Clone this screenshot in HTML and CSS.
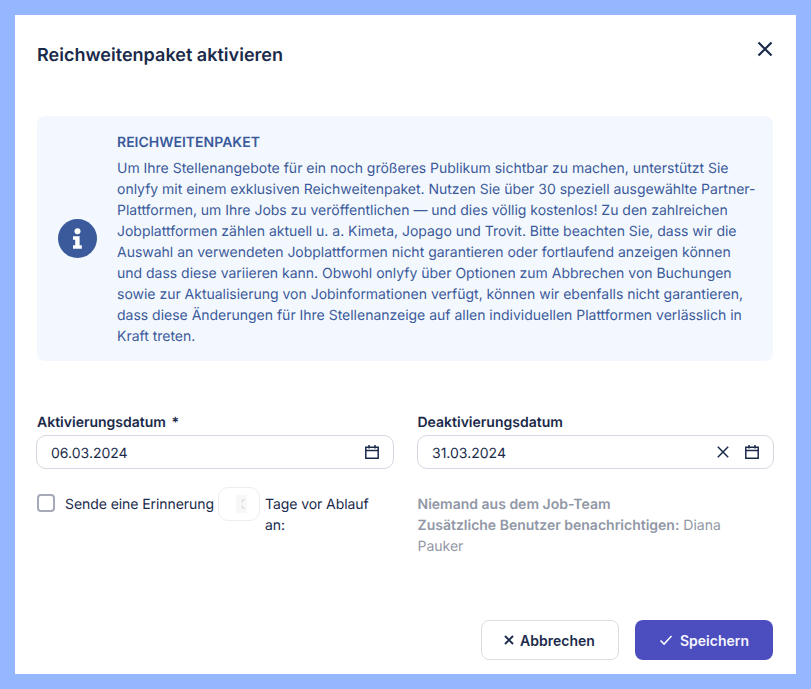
FILE: index.html
```html
<!DOCTYPE html>
<html lang="de">
<head>
<meta charset="utf-8">
<title>Reichweitenpaket aktivieren</title>
<link rel="stylesheet" href="styles.css">
</head>
<body>
<main class="modal">
  <header class="modal-head">
    <h1 class="modal-title">Reichweitenpaket aktivieren</h1>
    <button class="close" aria-label="Schließen">
      <svg viewBox="0 0 24 24" width="24" height="24"><path d="M5.5 5.5l13 13M18.5 5.5l-13 13" class="stroke-2"/></svg>
    </button>
  </header>

  <section class="info">
    <div class="info-icon">
      <svg viewBox="0 0 39 39" width="39" height="39">
        <circle cx="19.5" cy="19.5" r="19.5" fill="#3b5a9b"/>
        <circle cx="19.5" cy="12.2" r="3" fill="#fff"/>
        <path d="M15 17.2h6.6v9h2.2v3.6H15v-3.6h2.2v-5.4H15z" fill="#fff"/>
      </svg>
    </div>
    <div class="info-body">
      <h2 class="info-title">REICHWEITENPAKET</h2>
      <p class="info-text">Um Ihre Stellenangebote für ein noch größeres Publikum sichtbar zu machen, unterstützt Sie onlyfy mit einem exklusiven Reichweitenpaket. Nutzen Sie über 30 speziell ausgewählte Partner-Plattformen, um Ihre Jobs zu veröffentlichen — und dies völlig kostenlos! Zu den zahlreichen Jobplattformen zählen aktuell u. a. Kimeta, Jopago und Trovit. Bitte beachten Sie, dass wir die Auswahl an verwendeten Jobplattformen nicht garantieren oder fortlaufend anzeigen können und dass diese variieren kann. Obwohl onlyfy über Optionen zum Abbrechen von Buchungen sowie zur Aktualisierung von Jobinformationen verfügt, können wir ebenfalls nicht garantieren, dass diese Änderungen für Ihre Stellenanzeige auf allen individuellen Plattformen verlässlich in Kraft treten.</p>
    </div>
  </section>

  <section class="form">
    <div class="col col-left">
      <label class="label">Aktivierungsdatum <span class="req">*</span></label>
      <div class="input">
        <span class="value">06.03.2024</span>
        <svg class="ico" viewBox="0 0 16 16" width="16" height="16"><path d="M1.8 3.2h12.4v11H1.8zM1.8 6.6h12.4M5 1v3.4M11 1v3.4" class="stroke-15"/></svg>
      </div>
      <div class="reminder">
        <span class="check"></span>
        <span class="rem-text">Sende eine Erinnerung</span>
        <span class="number"><span class="spin"><svg viewBox="0 0 11 18" width="11" height="18"><path d="M8 4L5.5 7M5.5 11L8 14" fill="none" stroke="#dcdde4" stroke-width="1.5"/></svg></span></span>
        <span class="rem-text rem-after">Tage vor Ablauf an:</span>
      </div>
    </div>
    <div class="col col-right">
      <label class="label">Deaktivierungsdatum</label>
      <div class="input">
        <span class="value">31.03.2024</span>
        <svg class="ico" viewBox="0 0 16 16" width="16" height="16"><path d="M2.8 2.8l10.4 10.4M13.2 2.8L2.8 13.2" class="stroke-15"/></svg>
        <svg class="ico" viewBox="0 0 16 16" width="16" height="16"><path d="M1.8 3.2h12.4v11H1.8zM1.8 6.6h12.4M5 1v3.4M11 1v3.4" class="stroke-15"/></svg>
      </div>
      <div class="notify">
        <div><strong>Niemand aus dem Job-Team</strong></div>
        <div><strong>Zusätzliche Benutzer benachrichtigen:</strong> Diana<br>Pauker</div>
      </div>
    </div>
  </section>

  <footer class="actions">
    <button class="btn btn-ghost">
      <svg viewBox="0 0 12 12" width="12" height="12"><path d="M2 2l8 8M10 2l-8 8" class="stroke-18"/></svg>
      <span class="btn-label">Abbrechen</span>
    </button>
    <button class="btn btn-primary">
      <svg viewBox="0 0 14 14" width="14" height="14"><path d="M1.5 7.5l3.6 3.6 7.4-8.2" fill="none" stroke="#fff" stroke-width="1.5"/></svg>
      <span class="btn-label">Speichern</span>
    </button>
  </footer>
</main>
</body>
</html>
```

FILE: styles.css
```css
* { box-sizing: border-box; }
html, body { margin: 0; height: 100%; }
body {
  background: #94b7ff;
  padding: 15px;
  font-family: Inter, "Liberation Sans", sans-serif;
  font-size: 14px;
  color: #1a2a4a;
  overflow: hidden;
  text-rendering: geometricPrecision;
}
.modal {
  background: #fff;
  width: 781px;
  height: 659px;
  padding: 0 23px 14px 22px;
  display: flex;
  flex-direction: column;
}
.modal-head {
  height: 101px;
  display: flex;
  justify-content: space-between;
  align-items: flex-start;
  padding-top: 29px;
}
.modal-title { margin: 0; font-size: 18px; line-height: 24px; font-weight: 600; letter-spacing: 0.02px; }
.close {
  border: 0; background: none; padding: 0; margin: -7px -4px 0 0;
  width: 24px; height: 24px; cursor: pointer; display: block;
}
.stroke-2, .stroke-15, .stroke-18 { fill: none; stroke: #1a2a4a; }
.stroke-2 { stroke-width: 2.2; }
.stroke-15 { stroke-width: 1.5; }
.stroke-18 { stroke-width: 1.9; }

.info {
  height: 245px;
  background: #f3f8fe;
  border-radius: 8px;
  display: flex;
  align-items: center;
  padding: 0 16px 0 21px;
  color: #3b5a9b;
}
.info-icon { width: 59px; flex: none; height: 39px; }
.info-body { flex: 1; padding-top: 1px; }
.info-title { margin: 0 0 5px; font-size: 14px; line-height: 21px; font-weight: 600; }
.info-text { margin: 0; line-height: 21px; letter-spacing: -0.012px; }

.form {
  margin-top: 50px;
  display: grid;
  grid-template-columns: 356.5px 356px;
  column-gap: 24px;
}
.label { display: block; font-weight: 600; line-height: 21px; padding-top: 1px; height: 21px; }
.req { margin-left: 2px; }
.input {
  height: 34px;
  margin-top: 3px;
  border: 1px solid #d5d8e0;
  border-radius: 10px;
  display: flex;
  align-items: center;
  gap: 13px;
  padding: 0 12.5px 0 14px;
}
.col-left .input { margin-left: -1px; }
.col-right .input { margin-left: -0.5px; }
.value { flex: 1; padding-top: 2px; }
.ico { flex: none; }

.reminder { display: flex; align-items: flex-start; margin-top: 18px; }
.check {
  width: 18px; height: 18px; flex: none;
  border: 2px solid #a5a9b8; border-radius: 4px;
  margin-top: 7px; margin-right: 10px;
}
.rem-text { line-height: 21px; margin-top: 7px; white-space: nowrap; letter-spacing: -0.07px; }
.number {
  width: 42px; height: 34px; flex: none;
  margin: 0 5px 0 4px;
  border: 1px solid #eceef2; border-radius: 10px;
  display: flex; align-items: center; justify-content: center;
}
.spin { display: block; width: 11px; height: 18px; background: #f7f7f8; margin-left: 5px; }
.spin svg { display: block; }
.rem-after { width: 110px; white-space: normal; }

.notify { margin-top: 25px; line-height: 21px; color: #9197a6; }
.notify strong { font-weight: 600; }

.actions {
  margin-top: auto;
  display: flex;
  justify-content: flex-end;
  gap: 16px;
}
.btn {
  width: 138px; height: 40px;
  border-radius: 8px;
  font: 600 14px/20px Inter, "Liberation Sans", sans-serif;
  display: flex; align-items: center; justify-content: center; gap: 5px;
  cursor: pointer;
}
.btn-label { padding-top: 2px; }
.btn-ghost { background: #fff; border: 1px solid #dcdde2; color: #1a2a4a; padding: 0 8px 0 6px; }
.btn-primary { background: #4c4dbf; border: 0; color: #f4f5fd; gap: 7px; }
```
